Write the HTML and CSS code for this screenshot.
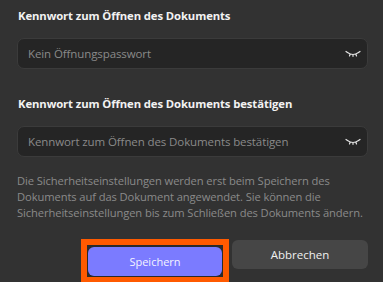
FILE: index.html
```html
<!DOCTYPE html>
<html lang="de">
<head>
    <meta charset="UTF-8">
    <title>Dokument schützen</title>
    <link rel="stylesheet" href="styles.css">
</head>
<body>
    <div class="panel">
        <label class="label" for="pw">Kennwort zum Öffnen des Dokuments</label>
        <div class="field">
            <input type="password" id="pw" placeholder="Kein Öffnungspasswort">
            <svg class="eye" width="16" height="8" viewBox="0 0 16 8">
                <path d="M1 1.5 L2.5 2.5 Q8 6.5 13.5 2.5 L15 1.5 M5 4.5 L4.5 6 M11 4.5 L11.5 6 M8 5.3 L8 6.3" fill="none" stroke="#e6e6e6" stroke-width="1.2" stroke-linecap="round"/>
            </svg>
        </div>

        <label class="label second" for="pw2">Kennwort zum Öffnen des Dokuments bestätigen</label>
        <div class="field">
            <input type="password" id="pw2" placeholder="Kennwort zum Öffnen des Dokuments bestätigen">
            <svg class="eye" width="16" height="8" viewBox="0 0 16 8">
                <path d="M1 1.5 L2.5 2.5 Q8 6.5 13.5 2.5 L15 1.5 M5 4.5 L4.5 6 M11 4.5 L11.5 6 M8 5.3 L8 6.3" fill="none" stroke="#e6e6e6" stroke-width="1.2" stroke-linecap="round"/>
            </svg>
        </div>

        <p class="note">Die Sicherheitseinstellungen werden erst beim Speichern des Dokuments auf das Dokument angewendet. Sie können die Sicherheitseinstellungen bis zum Schließen des Dokuments ändern.</p>

        <div class="actions">
            <span class="highlight"><button class="btn primary">Speichern</button></span>
            <button class="btn">Abbrechen</button>
        </div>
    </div>
</body>
</html>
```

FILE: styles.css
```css
body {
    margin: 0;
    background-color: #323232;
    font-family: 'Open Sans', 'Noto Sans', sans-serif;
    overflow: hidden;
}
.panel {
    width: 351px;
    padding: 6px 0 0 17px;
}
.label {
    display: block;
    margin-left: 1px;
    color: #f2f2f2;
    font-weight: bold;
    font-size: 11.3px;
    letter-spacing: -0.1px;
    line-height: 20px;
}
.label.second {
    margin-top: 25px;
}
.field {
    position: relative;
    margin-top: 12px;
}
.field input {
    display: block;
    box-sizing: border-box;
    width: 100%;
    height: 31px;
    padding: 0 36px 0 10px;
    background-color: #252525;
    border: 1px solid #3b3b3b;
    border-radius: 7px;
    color: #e0e0e0;
    font-family: inherit;
    font-size: 11.5px;
    letter-spacing: -0.1px;
    outline: none;
}
.field input::placeholder {
    color: #8a8a8a;
}
.eye {
    position: absolute;
    right: 7px;
    top: 12px;
}
.note {
    margin: 16px 0 0;
    color: #8a8a8a;
    font-size: 11.2px;
    letter-spacing: -0.1px;
    line-height: 16px;
}
.actions {
    display: flex;
    justify-content: flex-end;
    align-items: flex-start;
    gap: 3px;
    margin-top: 18px;
}
.highlight {
    display: block;
    border: 6px solid #ff5a00;
    padding: 2px 1px 1px;
    background-color: #2a2a2a;
}
.btn {
    display: block;
    width: 136px;
    height: 29px;
    margin-top: 1px;
    border: none;
    border-radius: 6px;
    background-color: #464646;
    color: #f0f0f0;
    font-family: inherit;
    font-size: 11.5px;
    cursor: pointer;
}
.btn.primary {
    width: 134px;
    margin-top: 0;
    background-color: #7b7bff;
    color: #f4f4ff;
    font-size: 11px;
}
```
